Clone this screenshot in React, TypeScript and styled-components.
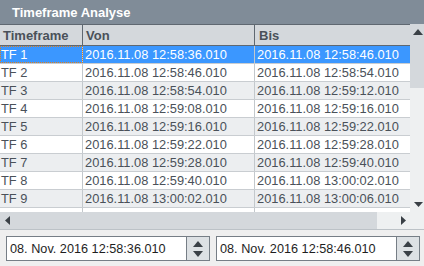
import styled, { createGlobalStyle } from 'styled-components';

const GlobalStyle = createGlobalStyle`
  html, body {
    margin: 0;
    padding: 0;
    background: #efefef;
  }
  * {
    box-sizing: border-box;
  }
`;

interface Timeframe {
  id: string;
  from: string;
  to: string;
}

const rows: Timeframe[] = [
  { id: 'TF 1', from: '2016.11.08 12:58:36.010', to: '2016.11.08 12:58:46.010' },
  { id: 'TF 2', from: '2016.11.08 12:58:46.010', to: '2016.11.08 12:58:54.010' },
  { id: 'TF 3', from: '2016.11.08 12:58:54.010', to: '2016.11.08 12:59:12.010' },
  { id: 'TF 4', from: '2016.11.08 12:59:08.010', to: '2016.11.08 12:59:16.010' },
  { id: 'TF 5', from: '2016.11.08 12:59:16.010', to: '2016.11.08 12:59:22.010' },
  { id: 'TF 6', from: '2016.11.08 12:59:22.010', to: '2016.11.08 12:59:28.010' },
  { id: 'TF 7', from: '2016.11.08 12:59:28.010', to: '2016.11.08 12:59:40.010' },
  { id: 'TF 8', from: '2016.11.08 12:59:40.010', to: '2016.11.08 13:00:02.010' },
  { id: 'TF 9', from: '2016.11.08 13:00:02.010', to: '2016.11.08 13:00:06.010' },
  { id: 'TF 10', from: '2016.11.08 13:00:06.010', to: '2016.11.08 13:00:20.010' },
];

const COLS = '83px 172px 155px';

const Frame = styled.div`
  width: 424px;
  height: 266px;
  display: flex;
  flex-direction: column;
  overflow: hidden;
  background: #efefef;
  font-family: 'Liberation Sans', Arial, sans-serif;
`;

const TitleBar = styled.div`
  height: 24px;
  flex: none;
  display: flex;
  align-items: center;
  padding-left: 12px;
  background: #808c98;
  color: #ffffff;
  font-size: 13px;
  font-weight: bold;
`;

const TableArea = styled.div`
  height: 188px;
  flex: none;
  display: grid;
  grid-template-columns: 410px 14px;
`;

const Table = styled.div`
  display: flex;
  flex-direction: column;
  overflow: hidden;
  background: #ffffff;
`;

const HeaderRow = styled.div`
  height: 22px;
  flex: none;
  display: grid;
  grid-template-columns: ${COLS};
  background: #d4d8dc;
  border-top: 1px solid #5f6871;
  border-bottom: 1px solid #5f6871;
`;

const HeaderCell = styled.div`
  display: flex;
  align-items: center;
  padding-left: 3px;
  font-size: 13px;
  font-weight: bold;
  color: #4a5159;
  border-right: 1px solid #5f6871;

  &:last-child {
    border-right: none;
    padding-left: 4px;
  }
`;

const Body = styled.div`
  flex: 1;
  overflow: hidden;
`;

const Row = styled.div<{ $selected: boolean; $odd: boolean }>`
  height: 18px;
  display: grid;
  grid-template-columns: ${COLS};
  border-bottom: 1px solid #c9cdd1;
  background: ${(p) => (p.$selected ? '#3b97ff' : p.$odd ? '#eceef0' : '#ffffff')};
  color: ${(p) => (p.$selected ? '#ffffff' : '#4a5159')};
`;

const Cell = styled.div<{ $focused?: boolean }>`
  display: flex;
  align-items: center;
  padding-left: 2px;
  font-size: 12.85px;
  white-space: nowrap;
  overflow: hidden;
  border-right: 1px solid #c3c8cc;
  outline: ${(p) => (p.$focused ? '1px dotted #e0801a' : 'none')};
  outline-offset: -1px;

  &:first-child {
    padding-left: 1px;
  }
  &:last-child {
    border-right: none;
  }
`;

const VScroll = styled.div`
  display: flex;
  flex-direction: column;
  background: #eef0f1;
`;

const VThumb = styled.div`
  height: 48px;
  flex: none;
  background: #d4d8dc;
`;

const ScrollButton = styled.div<{ $filled?: boolean }>`
  height: 16px;
  flex: none;
  display: flex;
  align-items: center;
  justify-content: center;
  padding-left: 2px;
  background: ${(p) => (p.$filled ? '#d4d8dc' : 'transparent')};
`;

const Spacer = styled.div`
  flex: 1;
`;

const HScroll = styled.div`
  height: 18px;
  flex: none;
  display: grid;
  grid-template-columns: 410px 14px;
  border-bottom: 1px solid #bcc2c7;
  background: #eef0f1;
`;

const HTrack = styled.div`
  display: flex;
`;

const HButton = styled.div<{ $filled?: boolean }>`
  width: 14px;
  flex: none;
  display: flex;
  align-items: center;
  justify-content: center;
  background: ${(p) => (p.$filled ? '#d4d8dc' : 'transparent')};
`;

const HThumb = styled.div`
  width: 363px;
  flex: none;
  background: #d4d8dc;
`;

const BottomPanel = styled.div`
  flex: 1;
  display: flex;
  gap: 6px;
  padding: 6px 4px 0 6px;
`;

const DateField = styled.div`
  width: 204px;
  height: 25px;
  display: flex;
  border: 1px solid #767e86;
  background: #ffffff;
`;

const DateText = styled.div`
  flex: 1;
  display: flex;
  align-items: center;
  padding-left: 3px;
  font-size: 12.7px;
  color: #1e1e1e;
`;

const Spinner = styled.div`
  width: 23px;
  flex: none;
  display: flex;
  flex-direction: column;
  align-items: center;
  justify-content: center;
  gap: 4px;
  border-left: 1px solid #767e86;
  background: #dde1e4;
`;

const Arrow = ({ dir, size = 9 }: { dir: 'up' | 'down' | 'left' | 'right'; size?: number }) => {
  const h = Math.round(size * 0.6);
  const vertical = dir === 'up' || dir === 'down';
  const w = vertical ? size : h;
  const ht = vertical ? h : size;
  const points = {
    up: `0,${ht} ${w / 2},0 ${w},${ht}`,
    down: `0,0 ${w},0 ${w / 2},${ht}`,
    left: `${w},0 ${w},${ht} 0,${ht / 2}`,
    right: `0,0 ${w},${ht / 2} 0,${ht}`,
  }[dir];
  return (
    <svg width={w} height={ht} viewBox={`0 0 ${w} ${ht}`}>
      <polygon points={points} fill="#3a4046" />
    </svg>
  );
};

const DateInput = ({ value }: { value: string }) => (
  <DateField>
    <DateText>{value}</DateText>
    <Spinner>
      <Arrow dir="up" size={10} />
      <Arrow dir="down" size={10} />
    </Spinner>
  </DateField>
);

export default function App() {
  return (
    <>
      <GlobalStyle />
      <Frame>
        <TitleBar>Timeframe Analyse</TitleBar>
        <TableArea>
          <Table>
            <HeaderRow>
              <HeaderCell>Timeframe</HeaderCell>
              <HeaderCell>Von</HeaderCell>
              <HeaderCell>Bis</HeaderCell>
            </HeaderRow>
            <Body>
              {rows.map((r, i) => (
                <Row key={r.id} $selected={i === 0} $odd={i % 2 === 0}>
                  <Cell $focused={i === 0}>{r.id}</Cell>
                  <Cell>{r.from}</Cell>
                  <Cell>{r.to}</Cell>
                </Row>
              ))}
            </Body>
          </Table>
          <VScroll>
            <ScrollButton $filled>
              <Arrow dir="up" size={10} />
            </ScrollButton>
            <VThumb />
            <Spacer />
            <ScrollButton>
              <Arrow dir="down" size={9} />
            </ScrollButton>
          </VScroll>
        </TableArea>
        <HScroll>
          <HTrack>
            <HButton $filled>
              <Arrow dir="left" size={9} />
            </HButton>
            <HThumb />
            <Spacer />
            <HButton>
              <Arrow dir="right" size={9} />
            </HButton>
          </HTrack>
          <div />
        </HScroll>
        <BottomPanel>
          <DateInput value="08. Nov. 2016 12:58:36.010" />
          <DateInput value="08. Nov. 2016 12:58:46.010" />
        </BottomPanel>
      </Frame>
    </>
  );
}
